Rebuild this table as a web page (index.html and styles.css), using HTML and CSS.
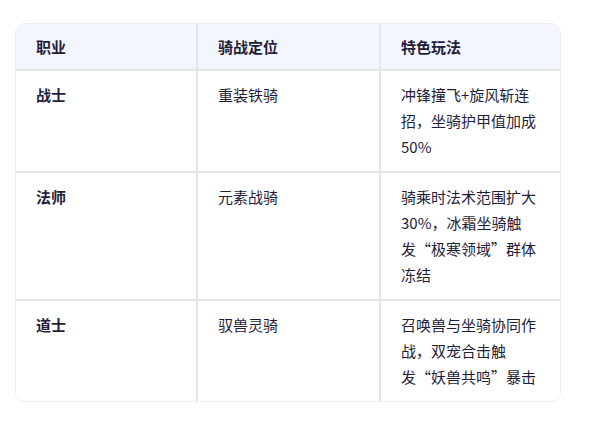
FILE: index.html
```html
<!DOCTYPE html>
<html lang="zh-CN">
<head>
<meta charset="utf-8">
<link rel="stylesheet" href="styles.css">
</head>
<body>
<div class="page">
  <table class="grid">
    <colgroup>
      <col class="c1">
      <col class="c2">
      <col class="c3">
    </colgroup>
    <thead>
      <tr>
        <th>职业</th>
        <th>骑战定位</th>
        <th>特色玩法</th>
      </tr>
    </thead>
    <tbody>
      <tr>
        <td class="name">战士</td>
        <td>重装铁骑</td>
        <td>冲锋撞飞+旋风斩连招，坐骑护甲值加成50%</td>
      </tr>
      <tr>
        <td class="name">法师</td>
        <td>元素战骑</td>
        <td>骑乘时法术范围扩大30%，冰霜坐骑触<span class="keep">发“极寒领域”</span>群体冻结</td>
      </tr>
      <tr>
        <td class="name">道士</td>
        <td>驭兽灵骑</td>
        <td>召唤兽与坐骑协同作战，双宠合击触<span class="keep">发“妖兽共鸣”</span>暴击</td>
      </tr>
    </tbody>
  </table>
</div>
</body>
</html>
```

FILE: styles.css
```css
html, body {
  margin: 0;
  padding: 0;
  background: #ffffff;
}

.page {
  padding: 23px 0 0 15px;
  font-family: "Noto Sans CJK SC", "Noto Sans", sans-serif;
  font-size: 15px;
  line-height: 26.25px;
  color: #1f1d38;
}

.grid {
  width: 546px;
  table-layout: fixed;
  border-collapse: separate;
  border-spacing: 0;
  border: 1px solid #eceef3;
  border-radius: 10px;
  overflow: hidden;
}

.grid .c1 { width: 182px; }
.grid .c2 { width: 183px; }

.grid th,
.grid td {
  text-align: left;
  vertical-align: top;
  padding: 10.5px 20px;
  border-right: 2px solid #e3e5ea;
  border-bottom: 2px solid #e3e5ea;
}

.grid th:last-child,
.grid td:last-child {
  border-right: none;
}

.grid tbody tr:last-child td {
  border-bottom: none;
}

.grid th {
  background: #f3f6fe;
  font-weight: 700;
  padding-top: 9.5px;
  padding-bottom: 9.5px;
}

.grid td.name {
  font-weight: 700;
}

.keep {
  white-space: nowrap;
}
```
